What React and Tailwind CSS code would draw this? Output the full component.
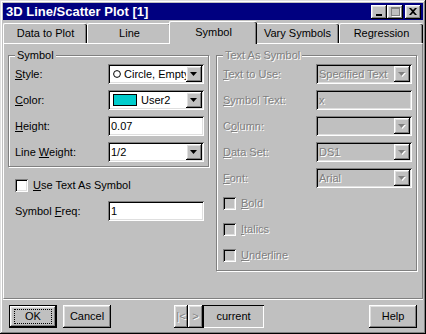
import React from 'react';

const raised = 'shadow-[inset_-1px_-1px_#000,inset_1px_1px_#fff,inset_-2px_-2px_#808080,inset_2px_2px_#dfdfdf]';
const sunken = 'shadow-[inset_1px_1px_#808080,inset_-1px_-1px_#fff,inset_2px_2px_#000,inset_-2px_-2px_#dfdfdf]';
const etched = 'border border-[#808080] shadow-[inset_1px_1px_#fff,1px_1px_#fff]';
const dim = 'text-[#808080] [text-shadow:1px_1px_0_#fff]';

function Arrow({ disabled }) {
    return (
        <svg width="8" height="5" viewBox="0 0 8 5" className="overflow-visible">
            {disabled && <polygon points="1,1 8,1 4.5,5" fill="#fff" />}
            <polygon points="0,0 7,0 3.5,4" fill={disabled ? '#808080' : '#000'} />
        </svg>
    );
}

function Combo({ children, disabled }) {
    return (
        <div className={`flex h-[20px] w-[96px] items-center ${sunken} ${disabled ? 'bg-[#c0c0c0]' : 'bg-white'}`}>
            <div className={`flex flex-1 items-center overflow-hidden whitespace-nowrap pl-[3px] ${disabled ? dim : ''}`}>{children}</div>
            <div className={`mr-[2px] flex h-[16px] w-[16px] shrink-0 items-center justify-center bg-[#c0c0c0] ${raised}`}>
                <Arrow disabled={disabled} />
            </div>
        </div>
    );
}

function Field({ children, disabled }) {
    return (
        <div className={`flex h-[20px] w-[96px] items-center pl-[3px] ${sunken} ${disabled ? 'bg-[#c0c0c0] ' + dim : 'bg-white'}`}>
            {children}
        </div>
    );
}

function Check({ disabled, children }) {
    return (
        <div className="flex h-[13px] items-center">
            <div className={`h-[13px] w-[13px] ${sunken} ${disabled ? 'bg-[#c0c0c0]' : 'bg-white'}`} />
            <span className={`ml-[5px] ${disabled ? dim : ''}`}>{children}</span>
        </div>
    );
}

function Row({ label, disabled, children }) {
    return (
        <div className="flex h-[20px] items-center">
            <span className={`w-[93px] ${disabled ? dim : ''}`}>{label}</span>
            {children}
        </div>
    );
}

function Group({ title, disabled, className, children }) {
    return (
        <div className={`relative ${etched} ${className}`}>
            <span className={`absolute -top-[7px] left-[6px] bg-[#c0c0c0] px-[2px] leading-[13px] ${disabled ? dim : ''}`}>{title}</span>
            {children}
        </div>
    );
}

function Button({ children, def, className = '' }) {
    return (
        <div className={`flex h-[23px] w-[48px] items-center justify-center bg-[#c0c0c0] ${def ? 'border border-black' : ''} ${className}`}>
            <div className={`flex h-full w-full items-center justify-center ${raised}`}>
                {def ? (
                    <span className="flex h-[15px] w-[38px] items-center justify-center border border-dotted border-black">{children}</span>
                ) : children}
            </div>
        </div>
    );
}

const tabs = ['Data to Plot', 'Line', 'Symbol', 'Vary Symbols', 'Regression'];

export default function App() {
    return (
        <div className={`flex h-[334px] w-[426px] flex-col bg-[#c0c0c0] p-[3px] font-['Liberation_Sans',Arial,sans-serif] text-[11px] leading-[13px] text-black shadow-[inset_-1px_-1px_#000,inset_1px_1px_#dfdfdf,inset_-2px_-2px_#808080,inset_2px_2px_#fff]`}>
            {/* title bar */}
            <div className="flex h-[17px] items-center bg-[#000080] pl-[3px] pr-[2px]">
                <span className="flex-1 text-[13px] font-bold leading-[15px] text-white">3D Line/Scatter Plot [1]</span>
                <div className={`flex h-[14px] w-[16px] items-end justify-center bg-[#c0c0c0] pb-[3px] ${raised}`}>
                    <div className="h-[2px] w-[6px] bg-black" />
                </div>
                <div className={`flex h-[14px] w-[16px] items-center justify-center bg-[#c0c0c0] ${raised}`}>
                    <div className="h-[9px] w-[9px] border border-t-2 border-[#808080] shadow-[1px_1px_#fff]" />
                </div>
                <div className={`ml-[2px] flex h-[14px] w-[16px] items-center justify-center bg-[#c0c0c0] ${raised}`}>
                    <svg width="8" height="7" viewBox="0 0 8 7">
                        <path d="M0 0h2l2 2 2-2h2L5 3.5 8 7H6L4 5 2 7H0l3-3.5z" fill="#000" />
                    </svg>
                </div>
            </div>

            {/* tabs */}
            <div className="mt-[1px] flex h-[22px] items-end">
                {tabs.map(t => t === 'Symbol' ? (
                    <div key={t} className="relative z-10 -mx-[2px] -mb-[1px] flex h-[23px] w-[88px] items-center justify-center rounded-t-[2px] border-l border-t border-white bg-[#c0c0c0] pb-[1px] shadow-[inset_-1px_0_#000,inset_-2px_0_#808080]">
                        {t}
                    </div>
                ) : (
                    <div key={t} className="flex h-[20px] w-[84px] items-center justify-center rounded-t-[2px] border-l border-t border-white shadow-[inset_-1px_0_#000,inset_-2px_0_#808080]">
                        {t}
                    </div>
                ))}
            </div>

            {/* page */}
            <div className="flex h-[256px] gap-[7px] border border-b-[#808080] border-l-white border-r-[#808080] border-t-white pl-[4px] pt-[11px]">
                <div className="flex w-[201px] flex-col">
                    <Group title="Symbol" className="flex h-[112px] flex-col gap-[6px] pb-[4px] pl-[6px] pt-[8px]">
                        <Row label={<><u>S</u>tyle:</>}>
                            <Combo>
                                <svg width="8" height="8" viewBox="0 0 8 8" className="ml-[2px] mr-[3px] shrink-0">
                                    <circle cx="4" cy="4" r="3.4" fill="none" stroke="#000" strokeWidth="1" />
                                </svg>
                                Circle, Empty
                            </Combo>
                        </Row>
                        <Row label={<><u>C</u>olor:</>}>
                            <Combo>
                                <span className="ml-[2px] mr-[4px] inline-block h-[12px] w-[24px] shrink-0 border border-black bg-[#00cccc]" />User2
                            </Combo>
                        </Row>
                        <Row label={<><u>H</u>eight:</>}>
                            <Field>0.07</Field>
                        </Row>
                        <Row label={<>Line <u>W</u>eight:</>}>
                            <Combo>1/2</Combo>
                        </Row>
                    </Group>
                    <div className="mt-[12px] pl-[7px]">
                        <Check><u>U</u>se Text As Symbol</Check>
                    </div>
                    <div className="mt-[9px] pl-[7px]">
                        <Row label={<>Symbol <u>F</u>req:</>}>
                            <Field>1</Field>
                        </Row>
                    </div>
                </div>

                <Group title="Text As Symbol" disabled className="flex h-[216px] w-[201px] flex-col pl-[6px] pt-[8px]">
                    <div className="flex flex-col gap-[6px]">
                        <Row disabled label={<><u>T</u>ext to Use:</>}>
                            <Combo disabled>Specified Text</Combo>
                        </Row>
                        <Row disabled label={<><u>S</u>ymbol Text:</>}>
                            <Field disabled>x</Field>
                        </Row>
                        <Row disabled label={<>C<u>o</u>lumn:</>}>
                            <Combo disabled />
                        </Row>
                        <Row disabled label={<><u>D</u>ata Set:</>}>
                            <Combo disabled>DS1</Combo>
                        </Row>
                        <Row disabled label={<><u>F</u>ont:</>}>
                            <Combo disabled>Arial</Combo>
                        </Row>
                    </div>
                    <div className="mt-[9px] flex flex-col gap-[13px]">
                        <Check disabled><u>B</u>old</Check>
                        <Check disabled><u>I</u>talics</Check>
                        <Check disabled><u>U</u>nderline</Check>
                    </div>
                </Group>
            </div>
            <div className="h-px bg-white" />

            {/* buttons */}
            <div className="mt-[5px] flex items-center pl-[6px] pr-[6px]">
                <Button def>OK</Button>
                <Button className="ml-[6px]">Cancel</Button>
                <div className="ml-[63px] flex h-[23px]">
                    <div className={`flex w-[14px] items-center justify-center ${raised} ${dim}`}>|&lt;</div>
                    <div className={`flex w-[15px] items-center justify-center ${raised} ${dim}`}>&gt;</div>
                    <div className="flex w-[61px] items-center justify-center shadow-[inset_1px_1px_#000,inset_-1px_-1px_#fff]">current</div>
                </div>
                <Button className="ml-auto">Help</Button>
            </div>
        </div>
    );
}
